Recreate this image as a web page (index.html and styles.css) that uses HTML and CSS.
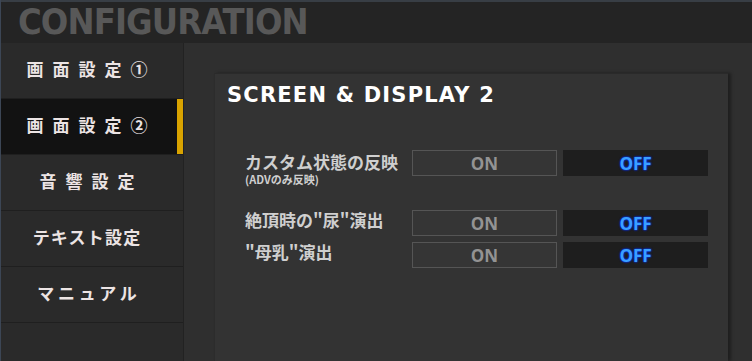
FILE: index.html
```html
<!DOCTYPE html>
<html lang="ja">
<head>
  <meta charset="UTF-8" />
  <title>CONFIGURATION</title>
  <link rel="stylesheet" href="styles.css">
</head>
<body>

  <header class="topbar">
    <h1>CONFIGURATION</h1>
  </header>

  <div class="main">
    <nav class="sidebar">
      <div class="menu-item wide">画面設定①</div>
      <div class="menu-item wide active">画面設定②</div>
      <div class="menu-item wide">音響設定</div>
      <div class="menu-item tight">テキスト設定</div>
      <div class="menu-item mid">マニュアル</div>
      <div class="menu-rest"></div>
    </nav>

    <section class="content">
      <div class="panel">
        <h2>SCREEN &amp; DISPLAY 2</h2>

        <div class="option first">
          <div class="label">
            <span>カスタム状態の反映</span>
            <small>(ADVのみ反映)</small>
          </div>
          <div class="btn on">ON</div>
          <div class="btn off">OFF</div>
        </div>

        <div class="option second">
          <div class="label">絶頂時の"尿"演出</div>
          <div class="btn on">ON</div>
          <div class="btn off">OFF</div>
        </div>

        <div class="option">
          <div class="label">"母乳"演出</div>
          <div class="btn on">ON</div>
          <div class="btn off">OFF</div>
        </div>
      </div>
    </section>
  </div>

</body>
</html>
```

FILE: styles.css
```css
body {
  margin: 0;
  width: 752px;
  height: 361px;
  overflow: hidden;
  background-color: #2f2f2f;
  font-family: "Noto Sans CJK JP", "Noto Sans", sans-serif;
  color: #eee;
  border-left: 1px solid #3c4655;
  box-sizing: border-box;
}
.topbar {
  height: 41px;
  border-top: 2px solid #383e45;
  background-color: #242424;
  padding-left: 17px;
}
.topbar h1 {
  margin: 0;
  font-family: "DejaVu Sans Condensed", "DejaVu Sans", sans-serif;
  font-weight: bold;
  font-size: 36px;
  line-height: 40px;
  letter-spacing: -0.9px;
  color: #585858;
}
.main {
  display: flex;
  height: 318px;
}
.sidebar {
  width: 182px;
  background-color: #2a2a2a;
  border-right: 1px solid #222;
  display: flex;
  flex-direction: column;
}
.menu-item {
  height: 52px;
  padding: 0 10px 3px 0;
  border-bottom: 1px solid #1f1f1f;
  display: flex;
  align-items: center;
  justify-content: center;
  font-size: 17px;
  line-height: 20px;
  font-weight: bold;
  color: #ece4e4;
}
.menu-item.wide {
  letter-spacing: 9px;
  text-indent: 9px;
}
.menu-item.mid {
  letter-spacing: 3.8px;
  text-indent: 3.8px;
}
.menu-item.tight {
  letter-spacing: 1.2px;
}
.menu-item.active {
  background-color: #121212;
  box-shadow: inset -6px 0 0 #d9a300;
}
.menu-rest {
  flex: 1;
}
.content {
  flex: 1;
  padding: 30px 24px 0 30px;
}
.panel {
  height: 100%;
  box-sizing: border-box;
  background-color: #333;
  border-top: 1px solid #2a2a2a;
  border-left: 1px solid #2c2c2c;
  box-shadow: 3px 0 3px rgba(0,0,0,0.35);
  padding: 9px 12px 0 30px;
}
.panel h2 {
  margin: 0 0 0 -18px;
  font-family: "DejaVu Sans", sans-serif;
  font-weight: bold;
  font-size: 21px;
  line-height: 24px;
  letter-spacing: 1.2px;
  color: #fff;
}
.option {
  display: grid;
  grid-template-columns: 167px 151px 145px;
  align-items: start;
}
.option.first {
  margin-top: 43px;
  height: 60px;
}
.option.second {
  margin-bottom: 6px;
}
.label {
  font-size: 17px;
  line-height: 20px;
  font-weight: bold;
  color: #cfcfcf;
  white-space: nowrap;
}
.label span {
  display: block;
  line-height: 18px;
  margin-top: 3px;
}
.label small {
  display: block;
  font-size: 11px;
  line-height: 12px;
  margin-top: 2px;
}
.btn {
  height: 26px;
  box-sizing: border-box;
  display: flex;
  align-items: center;
  justify-content: center;
  font-family: "Open Sans", sans-serif;
  font-weight: bold;
  font-size: 17px;
}
.btn.on {
  width: 145px;
  border: 1px solid #555;
  background-color: #353535;
  color: #939393;
}
.btn.off {
  background-color: #1e1e1e;
  color: #3aa0ff;
  text-shadow: 0 0 2px #0030ff, 0 0 2px #0030ff;
}
```
